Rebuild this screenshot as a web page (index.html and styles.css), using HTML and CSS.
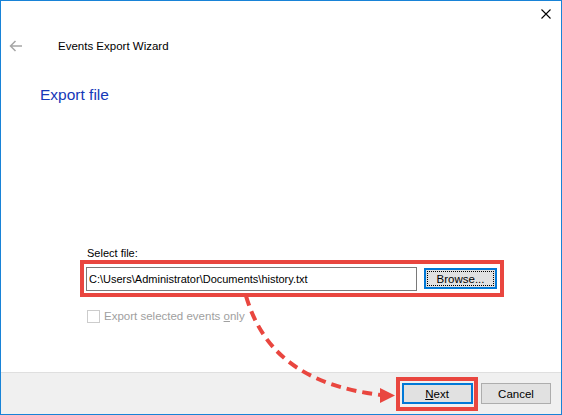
FILE: index.html
```html
<!DOCTYPE html>
<html lang="en">
<head>
<meta charset="utf-8">
<title>Events Export Wizard</title>
<link rel="stylesheet" href="styles.css">
</head>
<body>
<div class="window">
  <div class="caption">
    <svg class="close-icon" width="10" height="10" viewBox="0 0 10 10" aria-hidden="true">
      <path d="M0.5 0.5 L9.5 9.5 M9.5 0.5 L0.5 9.5" stroke="#000" stroke-width="1.1" fill="none"/>
    </svg>
  </div>
  <div class="header">
    <svg class="back-icon" width="14" height="12" viewBox="0 0 14 12" aria-hidden="true">
      <path d="M13 6 H1.5 M6.5 1 L1.5 6 L6.5 11" stroke="#a6a6a6" stroke-width="1.5" fill="none"/>
    </svg>
    <span class="title">Events Export Wizard</span>
  </div>
  <div class="main">
    <h1 class="heading">Export file</h1>
    <div class="form">
      <div class="field-label">Select file:</div>
      <div class="highlight file-row">
        <input class="path-input" type="text" value="C:\Users\Administrator\Documents\history.txt">
        <button class="btn btn-focus"><span class="focus-rect">Browse...</span></button>
      </div>
      <label class="check-row">
        <span class="checkbox"></span>
        <span class="check-label">Export selected events <u>o</u>nly</span>
      </label>
    </div>
  </div>
  <div class="footer">
    <div class="highlight next-frame">
      <button class="btn btn-default"><u>N</u>ext</button>
    </div>
    <button class="btn btn-cancel">Cancel</button>
  </div>
  <svg class="annotation" width="562" height="415" viewBox="0 0 562 415" aria-hidden="true">
    <path d="M246 296 C 262 350, 300 385, 381 395" stroke="#e9463f" stroke-width="4" fill="none" stroke-dasharray="10 6"/>
    <path d="M395 395.5 L380 388 L380 403 Z" fill="#e9463f"/>
  </svg>
</div>
</body>
</html>
```

FILE: styles.css
```css
html, body {
  margin: 0;
  padding: 0;
  background: #ffffff;
}

body {
  font-family: "Liberation Sans", Arial, sans-serif;
  color: #000;
}

.window {
  position: relative;
  width: 562px;
  height: 415px;
  box-sizing: border-box;
  border: 1px solid #1883d7;
  background: #ffffff;
  display: flex;
  flex-direction: column;
  overflow: hidden;
}

.caption {
  height: 30px;
  display: flex;
  justify-content: flex-end;
  align-items: flex-start;
  padding-right: 10px;
}

.close-icon {
  margin-top: 8px;
  display: block;
}

.header {
  height: 29px;
  display: flex;
  align-items: center;
  padding-left: 8px;
}

.back-icon {
  display: block;
}

.title {
  margin-left: 35px;
  font-size: 11.5px;
  line-height: 16px;
}

.main {
  flex: 1;
  display: flex;
  flex-direction: column;
}

.heading {
  margin: 25px 0 0 39px;
  font-size: 15.5px;
  line-height: 20px;
  font-weight: normal;
  color: #1538b8;
}

.form {
  margin-top: 142px;
  display: flex;
  flex-direction: column;
}

.field-label {
  margin-left: 86px;
  font-size: 11px;
  line-height: 13px;
}

.highlight {
  border: 4px solid #e9463f;
  box-sizing: border-box;
}

.file-row {
  margin-left: 79px;
  width: 424px;
  height: 37px;
  display: flex;
  align-items: center;
  padding: 0 3px 0 2px;
}

.path-input {
  width: 331px;
  height: 24px;
  box-sizing: border-box;
  border: 1px solid #7a7a7a;
  padding: 0 0 0 2px;
  margin: 0;
  font-family: "Liberation Sans", Arial, sans-serif;
  font-size: 11px;
  color: #000;
  background: #fff;
  outline: none;
}

.btn {
  font-family: "Liberation Sans", Arial, sans-serif;
  font-size: 11.5px;
  color: #000;
  background: #e1e1e1;
  box-sizing: border-box;
  height: 21px;
  margin: 0;
  padding: 0;
  display: flex;
  align-items: center;
  justify-content: center;
}

.btn-focus {
  margin-left: 7px;
  width: 73px;
  border: 2px solid #0078d7;
  padding: 1px;
}

.focus-rect {
  display: flex;
  align-items: center;
  justify-content: center;
  width: 100%;
  height: 100%;
  box-sizing: border-box;
  border: 1px dotted #000;
}

.check-row {
  margin: 12px 0 0 86px;
  display: flex;
  align-items: center;
  gap: 4px;
}

.checkbox {
  width: 13px;
  height: 13px;
  box-sizing: border-box;
  border: 1px solid #cccccc;
  background: #fff;
}

.check-label {
  font-size: 11.5px;
  line-height: 14px;
  color: #a0a0a0;
}

.footer {
  height: 42px;
  box-sizing: border-box;
  border-top: 1px solid #dfdfdf;
  background: #f0f0f0;
  display: flex;
  justify-content: flex-end;
  align-items: center;
  padding-right: 10px;
}

.next-frame {
  width: 82px;
  height: 34px;
  display: flex;
  align-items: center;
  justify-content: center;
}

.btn-default {
  width: 71px;
  border: 2px solid #0078d7;
}

.btn-cancel {
  margin-left: 3px;
  width: 70px;
  border: 1px solid #adadad;
}

.annotation {
  position: absolute;
  top: -1px;
  left: -1px;
  pointer-events: none;
}
```
